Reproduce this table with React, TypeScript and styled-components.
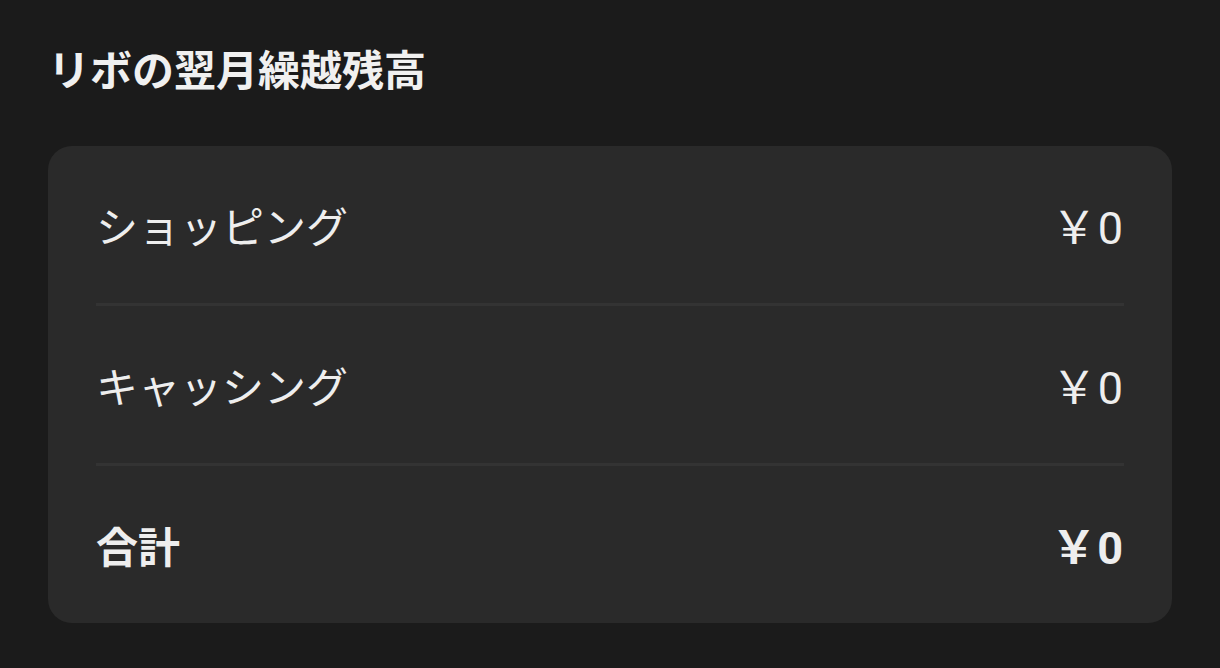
import React from "react";
import styled, { createGlobalStyle } from "styled-components";

const Global = createGlobalStyle`
  html, body { margin: 0; padding: 0; background: #1b1b1b; }
  body { font-family: "Noto Sans CJK JP", "Noto Sans", sans-serif; }
`;

const Page = styled.div`
  width: 1220px;
  height: 668px;
  box-sizing: border-box;
  padding: 43px 48px 0 48px;
  background: #1b1b1b;
  display: flex;
  flex-direction: column;
  gap: 53px;
`;

const Title = styled.h2`
  margin: 0;
  font-size: 42px;
  line-height: 50px;
  font-weight: 700;
  color: #f0f0f0;
`;

const Card = styled.div`
  background: #2a2a2a;
  border-radius: 24px;
  padding: 0 48px;
  display: flex;
  flex-direction: column;
`;

const Row = styled.div<{ $bold?: boolean }>`
  height: 157px;
  display: flex;
  align-items: center;
  justify-content: space-between;
  font-size: 42px;
  font-weight: ${(p) => (p.$bold ? 700 : 400)};
  color: #eeeeee;
  & + & {
    border-top: 3px solid #333333;
  }
`;

const Label = styled.span``;
const Value = styled.span`
  font-family: Roboto, "Noto Sans CJK JP", sans-serif;
  font-size: 45px;
  line-height: 1;
  padding-top: 7px;
  letter-spacing: 1px;
`;

const rows = [
  { label: "ショッピング", value: "￥0" },
  { label: "キャッシング", value: "￥0" },
  { label: "合計", value: "￥0", bold: true },
];

export default function App() {
  return (
    <>
      <Global />
      <Page>
        <Title>リボの翌月繰越残高</Title>
        <Card>
          {rows.map((r) => (
            <Row key={r.label} $bold={r.bold}>
              <Label>{r.label}</Label>
              <Value>{r.value}</Value>
            </Row>
          ))}
        </Card>
      </Page>
    </>
  );
}
